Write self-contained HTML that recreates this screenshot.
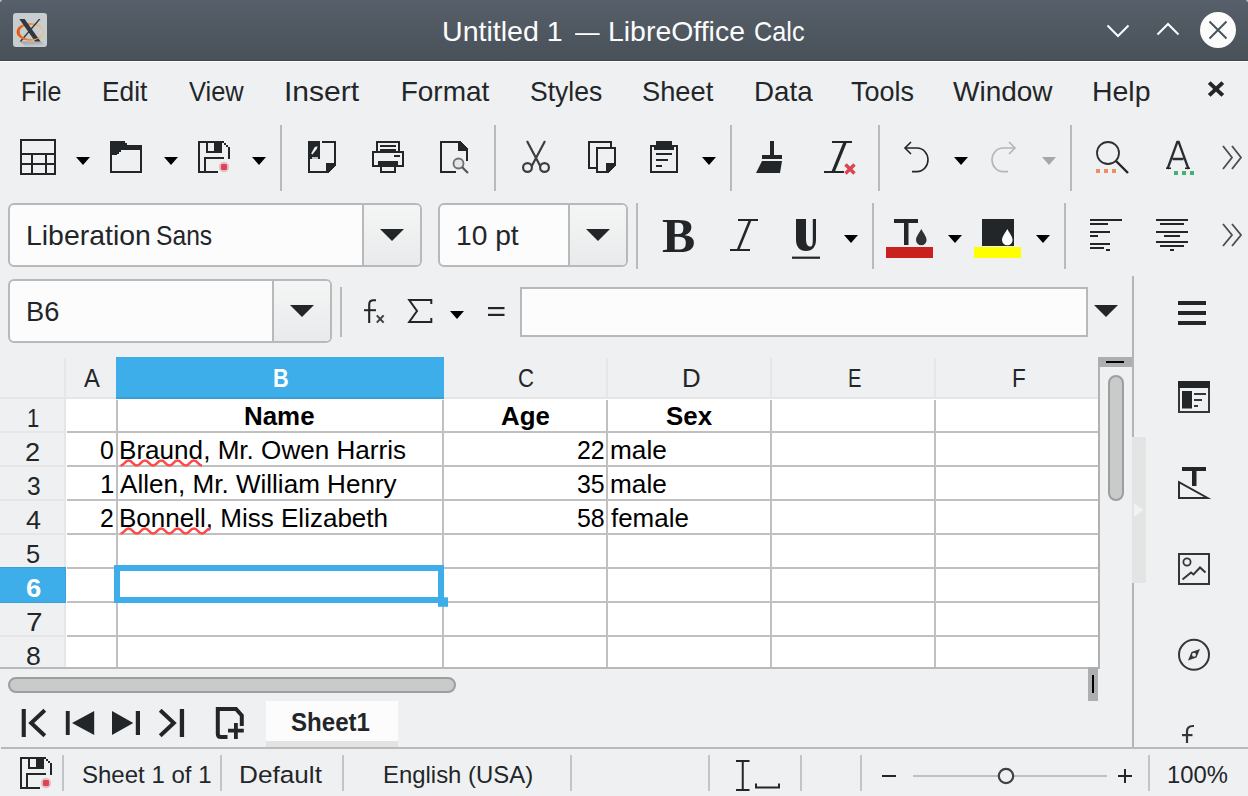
<!DOCTYPE html>
<html lang="en"><head><meta charset="utf-8"><title>Untitled 1 — LibreOffice Calc</title>
<style>
html,body{margin:0;padding:0}
body{width:1248px;height:796px;position:relative;overflow:hidden;background:#eff0f1;font-family:"Liberation Sans",sans-serif;color:#232629}
div,svg,span.t{position:absolute;box-sizing:border-box}
span.t{white-space:nowrap;transform-origin:0 50%}
svg{overflow:visible}
.sec{left:0;top:0;width:0;height:0}
</style></head><body>

<div class="sec" id="titlebar-menubar" role="banner"><div style="left:0px;top:0px;width:1248px;height:61px;background:linear-gradient(#57606a,#485058)"></div><div style="left:0px;top:60px;width:1248px;height:1px;background:#3f4850"></div><div style="left:0px;top:61px;width:1248px;height:1px;background:#fafbfb"></div><div style="left:0px;top:0px;width:2px;height:2px;background:#aeb3b7;border-radius:0 0 2px 0"></div><div style="left:1246px;top:0px;width:2px;height:2px;background:#aeb3b7;border-radius:0 0 0 2px"></div><div style="left:13px;top:13px;width:34px;height:34px;background:#c8cdd0;border-radius:3px;overflow:hidden"><svg style="left:0;top:0" width="34" height="34" viewBox="0 0 34 34"><defs><linearGradient id="og" x1="0" x2="1"><stop offset="0" stop-color="#e9520a"/><stop offset=".55" stop-color="#f2913a"/><stop offset="1" stop-color="#fbc055"/></linearGradient><linearGradient id="sh" x1="0" y1="0" x2="0.4" y2="1"><stop offset="0" stop-color="#000" stop-opacity=".22"/><stop offset="1" stop-color="#000" stop-opacity="0"/></linearGradient></defs><path d="M7 28.6H27.6L34 33V34H13Z" fill="url(#sh)"/><path fill-rule="evenodd" fill="url(#og)" d="M3.7 18.8A13.4 8.8 0 1 0 30.5 18.8A13.4 8.8 0 1 0 3.7 18.8ZM6.7 19A11.6 7.3 0 1 0 29.9 19A11.6 7.3 0 1 0 6.7 19Z"/><path d="M6.3 6H11.6L27.6 28.6H22.1Z" fill="#33383d"/><path d="M25.8 6H27.4L8.4 28.6H6.5Z" fill="#33383d"/><path fill="url(#og)" d="M3.7 18.8A13.4 8.8 0 0 0 30.5 18.8L29.9 19A11.6 7.3 0 0 1 6.7 19Z"/><path d="M26.6 6H27.3L19.5 15.3L18.6 15.5Z" fill="#33383d"/></svg></div><span class="t" style="left:442.00px;top:14.32px;font-size:28.5px;line-height:34px;color:#fcfcfc;transform:scaleX(1.0021);">Untitled 1</span><span class="t" style="left:574.60px;top:14.32px;font-size:28.5px;line-height:34px;color:#fcfcfc;transform:scaleX(0.8621);">—</span><span class="t" style="left:608.31px;top:14.32px;font-size:28.5px;line-height:34px;color:#fcfcfc;transform:scaleX(0.9974);">LibreOffice</span><span class="t" style="left:753.91px;top:14.32px;font-size:28.5px;line-height:34px;color:#fcfcfc;transform:scaleX(0.8859);">Calc</span><svg style="left:0px;top:0px;" width="1248" height="61" ><path d="M1107.5 25.5L1118 36L1128.5 25.5" fill="none" stroke="#fcfcfc" stroke-width="2"/><path d="M1157.5 34.5L1168 24L1178.5 34.5" fill="none" stroke="#fcfcfc" stroke-width="2"/><circle cx="1218" cy="30" r="18" fill="#fcfcfc"/><path d="M1209.5 21.5L1226.5 38.5M1226.5 21.5L1209.5 38.5" stroke="#4b545c" stroke-width="2"/></svg><span class="t" style="left:20.51px;top:74.80px;font-size:28px;line-height:34px;color:#232629;transform:scaleX(0.8932);">File</span><span class="t" style="left:101.92px;top:74.80px;font-size:28px;line-height:34px;color:#232629;transform:scaleX(0.9383);">Edit</span><span class="t" style="left:189.00px;top:74.80px;font-size:28px;line-height:34px;color:#232629;transform:scaleX(0.9087);">View</span><span class="t" style="left:284.15px;top:74.80px;font-size:28px;line-height:34px;color:#232629;transform:scaleX(1.0740);">Insert</span><span class="t" style="left:400.70px;top:74.80px;font-size:28px;line-height:34px;color:#232629;">Format</span><span class="t" style="left:529.55px;top:74.80px;font-size:28px;line-height:34px;color:#232629;transform:scaleX(0.9468);">Styles</span><span class="t" style="left:641.53px;top:74.80px;font-size:28px;line-height:34px;color:#232629;transform:scaleX(0.9739);">Sheet</span><span class="t" style="left:753.52px;top:74.80px;font-size:28px;line-height:34px;color:#232629;transform:scaleX(0.9901);">Data</span><span class="t" style="left:851.00px;top:74.80px;font-size:28px;line-height:34px;color:#232629;transform:scaleX(0.9633);">Tools</span><span class="t" style="left:953.00px;top:74.80px;font-size:28px;line-height:34px;color:#232629;">Window</span><span class="t" style="left:1092.07px;top:74.80px;font-size:28px;line-height:34px;color:#232629;transform:scaleX(1.0161);">Help</span><svg style="left:1207px;top:80px;" width="18" height="18" ><path d="M2.2 2.6L15.8 15.4M15.8 2.6L2.2 15.4" stroke="#232629" stroke-width="4"/></svg></div>
<div class="sec" id="standard-toolbar" role="toolbar"><svg style="left:20px;top:139px;" width="36" height="36" shape-rendering="crispEdges"><g fill="none" stroke="#232629" stroke-width="2"><rect x="1" y="1" width="34" height="34"/><path d="M1 14.5H35M1 24.5H35M11.5 14.5V35M25.5 14.5V35"/></g></svg><svg style="left:76px;top:157px;" width="14" height="8" ><path d="M0 0H14L7.0 8Z" fill="#000"/></svg><svg style="left:110px;top:141px;" width="32" height="32" viewBox="0 0 16 16" shape-rendering="crispEdges"><path d="M0 0H7.5V1H8.5V2H16V4.6H5.5V5.5H4.5V6.3H3.5V7H0Z" fill="#232629"/><rect x="0" y="0" width="1" height="16" fill="#232629"/><rect x="0" y="15" width="16" height="1" fill="#232629"/><rect x="15" y="2" width="1" height="14" fill="#232629"/></svg><svg style="left:164px;top:157px;" width="14" height="8" ><path d="M0 0H14L7.0 8Z" fill="#000"/></svg><svg style="left:198px;top:141px;" width="32" height="32" viewBox="0 0 16 16" shape-rendering="crispEdges"><rect x="0" y="0" width="1" height="16" fill="#232629"/><rect x="0" y="0" width="13" height="1" fill="#232629"/><rect x="0" y="15" width="10" height="1" fill="#232629"/><rect x="15" y="3" width="1" height="6" fill="#232629"/><rect x="13" y="1" width="1" height="1" fill="#232629"/><rect x="14" y="2" width="1" height="1" fill="#232629"/><rect x="4" y="0" width="1" height="6" fill="#232629"/><rect x="4" y="5" width="8" height="1" fill="#232629"/><rect x="8" y="0" width="4" height="6" fill="#232629"/><rect x="12" y="0" width="1" height="1" fill="#232629"/><rect x="3" y="8" width="10" height="1" fill="#232629"/><rect x="3" y="8" width="1" height="8" fill="#232629"/></svg><svg style="left:218px;top:161px;" width="12" height="12" ><circle cx="6" cy="6" r="5.2" fill="#da4453" opacity=".3"/><rect x="3" y="3" width="6" height="6" rx="1.2" fill="#da4453"/></svg><svg style="left:252px;top:157px;" width="14" height="8" ><path d="M0 0H14L7.0 8Z" fill="#000"/></svg><div style="left:280px;top:125px;width:2px;height:66px;background:#b9babb"></div><svg style="left:308px;top:141px;" width="28" height="32" viewBox="0 0 14 16" shape-rendering="crispEdges"><rect x="0" y="0" width="6" height="9" fill="#232629"/><rect x="7" y="0" width="7" height="1" fill="#232629"/><rect x="13" y="0" width="1" height="12" fill="#232629"/><rect x="0" y="9" width="1" height="7" fill="#232629"/><rect x="0" y="15" width="10" height="1" fill="#232629"/><path d="M9 11H14V12L10.5 16H9Z" fill="#232629"/><path d="M1.6 6.2L3.4 3L4.8 2.6L4.4 4L2.2 6.8Z" fill="#eff0f1" shape-rendering="auto"/><rect x="2" y="8" width="3" height="1" fill="#bfc0c1"/></svg><svg style="left:372px;top:141px;" width="32" height="32" viewBox="0 0 16 16" shape-rendering="crispEdges"><rect x="2" y="0" width="12" height="1" fill="#232629"/><rect x="2" y="0" width="1" height="6" fill="#232629"/><rect x="13" y="0" width="1" height="6" fill="#232629"/><rect x="4" y="2" width="8" height="1" fill="#232629"/><rect x="4" y="4" width="8" height="2" fill="#232629"/><rect x="0" y="5" width="16" height="1" fill="#232629"/><rect x="0" y="5" width="1" height="8" fill="#232629"/><rect x="15" y="5" width="1" height="8" fill="#232629"/><rect x="0" y="12" width="16" height="1" fill="#232629"/><rect x="11" y="7" width="3" height="1" fill="#232629"/><rect x="3" y="10" width="10" height="2" fill="#232629"/><rect x="4" y="12" width="1" height="4" fill="#232629"/><rect x="11" y="12" width="1" height="4" fill="#232629"/><rect x="4" y="15" width="8" height="1" fill="#232629"/></svg><svg style="left:440px;top:141px;" width="28" height="32" viewBox="0 0 14 16" shape-rendering="crispEdges"><rect x="0" y="0" width="1" height="16" fill="#232629"/><rect x="0" y="0" width="10" height="1" fill="#232629"/><rect x="0" y="15" width="8" height="1" fill="#232629"/><rect x="13" y="4" width="1" height="6" fill="#232629"/><path d="M9 0H10L14 4V5H9Z" fill="#232629"/></svg><svg style="left:440px;top:141px;" width="32" height="34" ><circle cx="18.5" cy="22.5" r="5" fill="#e4e5e6" stroke="#6d7072" stroke-width="1.8"/><path d="M22 26L28 32" stroke="#55585b" stroke-width="2.2"/></svg><div style="left:494px;top:125px;width:2px;height:66px;background:#b9babb"></div><svg style="left:522px;top:141px;" width="28" height="32" ><g fill="none" stroke="#3b3e41" stroke-width="2.2"><path d="M5 0L18.5 25.5M23 0L9.5 25.5"/><circle cx="5.5" cy="26.5" r="4.4"/><circle cx="22.5" cy="26.5" r="4.4"/></g></svg><svg style="left:588px;top:141px;" width="28" height="32" viewBox="0 0 14 16" shape-rendering="crispEdges"><rect x="0" y="0" width="12" height="1" fill="#232629"/><rect x="0" y="0" width="1" height="14" fill="#232629"/><rect x="0" y="13" width="4" height="1" fill="#232629"/><rect x="11" y="0" width="1" height="3" fill="#232629"/><rect x="4" y="3" width="10" height="1" fill="#232629"/><rect x="4" y="3" width="1" height="13" fill="#232629"/><rect x="13" y="3" width="1" height="8" fill="#232629"/><rect x="4" y="15" width="6" height="1" fill="#232629"/><path d="M9 11H14V12L10.5 16H9Z" fill="#232629"/></svg><svg style="left:650px;top:141px;" width="28" height="32" viewBox="0 0 14 16" shape-rendering="crispEdges"><rect x="3" y="0" width="8" height="2" fill="#232629"/><rect x="2" y="2" width="10" height="2.7" fill="#232629"/><rect x="0" y="2" width="1" height="14" fill="#232629"/><rect x="13" y="2" width="1" height="14" fill="#232629"/><rect x="0" y="2" width="14" height="1" fill="#232629"/><rect x="0" y="15" width="14" height="1" fill="#232629"/><rect x="3" y="6" width="8" height="1" fill="#232629"/><rect x="3" y="9" width="6" height="1" fill="#232629"/><rect x="3" y="12" width="3" height="1" fill="#232629"/></svg><svg style="left:702px;top:157px;" width="14" height="8" ><path d="M0 0H14L7.0 8Z" fill="#000"/></svg><div style="left:730px;top:125px;width:2px;height:66px;background:#b9babb"></div><svg style="left:756px;top:141px;" width="28" height="32" ><path d="M14 0H18V14H26V18H6V14H14Z" fill="#232629"/><path d="M6 20H26L24 32H0Z" fill="#232629"/></svg><svg style="left:824px;top:141px;" width="34" height="36" ><path d="M8 0H28V2H8ZM0 30H20V32H0Z" fill="#232629"/><path d="M19.3 1.5H22.8L11 30.5H7.5Z" fill="#232629"/><path d="M21.5 23.5L30.5 32.5M30.5 23.5L21.5 32.5" stroke="#da4453" stroke-width="3.4"/></svg><div style="left:878px;top:125px;width:2px;height:66px;background:#b9babb"></div><svg style="left:904px;top:141px;" width="24" height="32" ><g fill="none" stroke="#232629" stroke-width="1.6"><path d="M7 1L1 7L7 13"/><path d="M1 7H13A11 11.8 0 0 1 13 30.6H8"/></g></svg><svg style="left:954px;top:157px;" width="14" height="8" ><path d="M0 0H14L7.0 8Z" fill="#000"/></svg><svg style="left:992px;top:141px;" width="24" height="32" ><g fill="none" stroke="#b3b5b6" stroke-width="1.6" transform="translate(24 0) scale(-1 1)"><path d="M7 1L1 7L7 13"/><path d="M1 7H13A11 11.8 0 0 1 13 30.6H8"/></g></svg><svg style="left:1042px;top:157px;" width="14" height="8" ><path d="M0 0H14L7.0 8Z" fill="#a6a7a8"/></svg><div style="left:1070px;top:125px;width:2px;height:66px;background:#b9babb"></div><svg style="left:1096px;top:141px;" width="34" height="34" ><circle cx="12" cy="12" r="11" fill="none" stroke="#2d3033" stroke-width="1.8"/><path d="M20 20L32 32" stroke="#232629" stroke-width="2.4"/><rect x="0" y="28" width="4" height="4" fill="#f08b63"/><rect x="8" y="28" width="4" height="4" fill="#f08b63"/><rect x="16" y="28" width="4" height="4" fill="#f08b63"/></svg><svg style="left:1166px;top:141px;" width="30" height="36" ><path d="M1.5 28L11.3 1H12.7L22.5 28M6.6 18H17.4" fill="none" stroke="#2b2e31" stroke-width="2.3"/><path d="M0 26.5H5V28H0ZM19 26.5H24V28H19Z" fill="#232629"/><rect x="8" y="30" width="4" height="4" fill="#3fb371"/><rect x="16" y="30" width="4" height="4" fill="#3fb371"/><rect x="24" y="30" width="4" height="4" fill="#3fb371"/></svg><svg style="left:1222px;top:145px;" width="22" height="26" ><path d="M1 1L10 12.5L1 24M10 1L19 12.5L10 24" fill="none" stroke="#4a4d50" stroke-width="1.8"/></svg></div>
<div class="sec" id="formatting-toolbar" role="toolbar"><div style="left:8px;top:203px;width:414px;height:64px;background:#fcfcfc;border:2px solid #b8b9ba;border-radius:6px;overflow:hidden"><div style="left:352px;top:0;width:60px;height:60px;border-left:2px solid #b8b9ba;background:linear-gradient(#f4f5f5,#e9eaeb)"></div></div><span class="t" style="left:25.77px;top:219.30px;font-size:28px;line-height:34px;color:#232629;transform:scaleX(1.0150);">Liberation</span><span class="t" style="left:156.32px;top:219.30px;font-size:28px;line-height:34px;color:#232629;transform:scaleX(0.8800);">Sans</span><svg style="left:380px;top:229px;" width="24" height="12" ><path d="M0 0H24L12 12Z" fill="#232629"/></svg><div style="left:438px;top:203px;width:190px;height:64px;background:#fcfcfc;border:2px solid #b8b9ba;border-radius:6px;overflow:hidden"><div style="left:128px;top:0;width:60px;height:60px;border-left:2px solid #b8b9ba;background:linear-gradient(#f4f5f5,#e9eaeb)"></div></div><span class="t" style="left:455.79px;top:219.30px;font-size:28px;line-height:34px;color:#232629;transform:scaleX(1.0067);">10 pt</span><svg style="left:586px;top:229px;" width="24" height="12" ><path d="M0 0H24L12 12Z" fill="#232629"/></svg><div style="left:636px;top:203px;width:2px;height:66px;background:#b9babb"></div><span class="t" style="left:661.80px;top:206.67px;font-size:48px;line-height:58px;color:#232629;font-weight:700;font-family:'Liberation Serif',serif;transform:scaleX(1.0387);">B</span><svg style="left:730px;top:219px;" width="28" height="32" ><path d="M8 0H28V2H8ZM0 30H20V32H0Z" fill="#232629"/><path d="M18.6 1.5H21.4L9.6 30.5H6.8Z" fill="#232629"/></svg><svg style="left:792px;top:219px;" width="28" height="40" ><path d="M4 0H14V20C14 25 15.5 27.5 18.5 27.5C20.5 27.5 20.8 25 20.8 20V0H24V21C24 27.5 20.5 32 14 32C7.5 32 4 27.5 4 21Z" fill="#232629"/><rect x="0" y="37.6" width="28" height="2.2" fill="#232629"/></svg><svg style="left:844px;top:235px;" width="14" height="8" ><path d="M0 0H14L7.0 8Z" fill="#000"/></svg><div style="left:872px;top:203px;width:2px;height:66px;background:#b9babb"></div><svg style="left:886px;top:219px;" width="48" height="40" ><path d="M8 0H32V4H22.5V26H18V4H8Z" fill="#232629"/><path d="M35.3 10C37 13.5 40.6 17.5 40.6 21A5.3 5.3 0 0 1 30 21C30 17.5 33.6 13.5 35.3 10Z" fill="#2f3235"/><rect x="0" y="28" width="47" height="11" fill="#c9211e"/></svg><svg style="left:948px;top:235px;" width="14" height="8" ><path d="M0 0H14L7.0 8Z" fill="#000"/></svg><svg style="left:974px;top:219px;" width="48" height="40" ><rect x="8" y="0" width="32" height="27" fill="#232629"/><path d="M33.3 10C35 13.5 38.6 17.5 38.6 21A5.3 5.3 0 0 1 28 21C28 17.5 31.6 13.5 33.3 10Z" fill="#fcfcfc"/><rect x="0" y="28" width="47" height="11" fill="#ffff00"/></svg><svg style="left:1036px;top:235px;" width="14" height="8" ><path d="M0 0H14L7.0 8Z" fill="#000"/></svg><div style="left:1064px;top:203px;width:2px;height:66px;background:#b9babb"></div><svg style="left:1090px;top:219px;" width="32" height="32" shape-rendering="crispEdges"><rect x="0" y="0" width="32" height="2" fill="#232629"/><rect x="0" y="4" width="18" height="2" fill="#232629"/><rect x="0" y="12" width="20" height="2" fill="#232629"/><rect x="0" y="16" width="8" height="2" fill="#232629"/><rect x="0" y="24" width="20" height="2" fill="#232629"/><rect x="0" y="28" width="14" height="2" fill="#232629"/><rect x="16" y="30" width="4" height="2" fill="#232629"/></svg><svg style="left:1156px;top:219px;" width="32" height="32" shape-rendering="crispEdges"><rect x="0" y="0" width="32" height="2" fill="#232629"/><rect x="4" y="4" width="24" height="2" fill="#232629"/><rect x="0" y="12" width="32" height="2" fill="#232629"/><rect x="8" y="16" width="16" height="2" fill="#232629"/><rect x="0" y="22" width="32" height="2" fill="#232629"/><rect x="4" y="26" width="24" height="2" fill="#232629"/><rect x="14" y="30" width="4" height="2" fill="#232629"/></svg><svg style="left:1222px;top:223px;" width="22" height="26" ><path d="M1 1L10 12L1 23M10 1L19 12L10 23" fill="none" stroke="#4a4d50" stroke-width="1.8"/></svg></div>
<div class="sec" id="formula-bar" role="toolbar"><div style="left:8px;top:279px;width:324px;height:64px;background:#fcfcfc;border:2px solid #b8b9ba;border-radius:6px;overflow:hidden"><div style="left:262px;top:0;width:60px;height:60px;border-left:2px solid #b8b9ba;background:linear-gradient(#f4f5f5,#e9eaeb)"></div></div><span class="t" style="left:25.86px;top:294.70px;font-size:28px;line-height:34px;color:#232629;transform:scaleX(0.9724);">B6</span><svg style="left:290px;top:305px;" width="24" height="12" ><path d="M0 0H24L12 12Z" fill="#232629"/></svg><div style="left:340px;top:287px;width:2px;height:50px;background:#b9babb"></div><svg style="left:364px;top:299px;" width="22" height="25" ><path d="M12 1.2H9.5C6.5 1.2 5.2 2.5 5.2 5.5V24" fill="none" stroke="#232629" stroke-width="2.1"/><rect x="0" y="10.2" width="12" height="2" fill="#232629"/><path d="M12.8 16.4L19.6 23.6M19.6 16.4L12.8 23.6" stroke="#3a3d40" stroke-width="2"/></svg><svg style="left:407px;top:299px;" width="26" height="25" ><path d="M24.3 5V1H2.2L10 12L2.2 23H24.3V19" fill="none" stroke="#232629" stroke-width="2"/></svg><svg style="left:450px;top:311px;" width="14" height="8" ><path d="M0 0H14L7.0 8Z" fill="#000"/></svg><svg style="left:488px;top:307px;" width="17" height="10" ><rect x="0" y="0" width="16.5" height="2.2" fill="#232629"/><rect x="0" y="6.8" width="16.5" height="2.2" fill="#232629"/></svg><div style="left:520px;top:287px;width:568px;height:50px;background:#fcfcfc;border:2px solid #b8b9ba"></div><svg style="left:1094px;top:305px;" width="24" height="12" ><path d="M0 0H24L12 12Z" fill="#232629"/></svg></div>
<div class="sec" id="spreadsheet-grid" role="grid"><div style="left:66px;top:399px;width:1032px;height:268px;background:#fff"></div><div style="left:0px;top:397px;width:1098px;height:2px;background:#e5e6e7"></div><div style="left:64px;top:358px;width:2px;height:41px;background:#e5e6e7"></div><div style="left:116px;top:358px;width:2px;height:41px;background:#e5e6e7"></div><div style="left:442px;top:358px;width:2px;height:41px;background:#e5e6e7"></div><div style="left:606px;top:358px;width:2px;height:41px;background:#e5e6e7"></div><div style="left:770px;top:358px;width:2px;height:41px;background:#e5e6e7"></div><div style="left:934px;top:358px;width:2px;height:41px;background:#e5e6e7"></div><div style="left:0px;top:431px;width:66px;height:2px;background:#e5e6e7"></div><div style="left:0px;top:465px;width:66px;height:2px;background:#e5e6e7"></div><div style="left:0px;top:499px;width:66px;height:2px;background:#e5e6e7"></div><div style="left:0px;top:533px;width:66px;height:2px;background:#e5e6e7"></div><div style="left:0px;top:567px;width:66px;height:2px;background:#e5e6e7"></div><div style="left:0px;top:601px;width:66px;height:2px;background:#e5e6e7"></div><div style="left:0px;top:635px;width:66px;height:2px;background:#e5e6e7"></div><div style="left:64px;top:399px;width:2px;height:268px;background:#e5e6e7"></div><div style="left:116px;top:400px;width:2px;height:267px;background:#c0c0c0"></div><div style="left:442px;top:400px;width:2px;height:267px;background:#c0c0c0"></div><div style="left:606px;top:400px;width:2px;height:267px;background:#c0c0c0"></div><div style="left:770px;top:400px;width:2px;height:267px;background:#c0c0c0"></div><div style="left:934px;top:400px;width:2px;height:267px;background:#c0c0c0"></div><div style="left:67px;top:431px;width:1031px;height:2px;background:#c0c0c0"></div><div style="left:67px;top:465px;width:1031px;height:2px;background:#c0c0c0"></div><div style="left:67px;top:499px;width:1031px;height:2px;background:#c0c0c0"></div><div style="left:67px;top:533px;width:1031px;height:2px;background:#c0c0c0"></div><div style="left:67px;top:567px;width:1031px;height:2px;background:#c0c0c0"></div><div style="left:67px;top:601px;width:1031px;height:2px;background:#c0c0c0"></div><div style="left:67px;top:635px;width:1031px;height:2px;background:#c0c0c0"></div><div style="left:116px;top:357px;width:328px;height:42px;background:#3daee9;border-bottom:2px solid #3a9fd6"></div><div style="left:0px;top:567px;width:66px;height:36px;background:#3daee9;border:1px solid #3a9fd6;border-left:0"></div><span class="t" style="left:84.00px;top:361.99px;font-size:26px;line-height:32px;color:#232629;transform:scaleX(0.9111);">A</span><span class="t" style="left:518.15px;top:361.99px;font-size:26px;line-height:32px;color:#232629;transform:scaleX(0.8529);">C</span><span class="t" style="left:681.81px;top:361.99px;font-size:26px;line-height:32px;color:#232629;transform:scaleX(0.9938);">D</span><span class="t" style="left:848.15px;top:361.99px;font-size:26px;line-height:32px;color:#232629;transform:scaleX(0.7733);">E</span><span class="t" style="left:1011.76px;top:361.99px;font-size:26px;line-height:32px;color:#232629;transform:scaleX(0.8692);">F</span><span class="t" style="left:273.16px;top:361.99px;font-size:26px;line-height:32px;color:#fff;font-weight:700;transform:scaleX(0.8353);">B</span><span class="t" style="left:26.75px;top:401.99px;font-size:26px;line-height:32px;color:#232629;transform:scaleX(0.8462);">1</span><span class="t" style="left:25.35px;top:435.99px;font-size:26px;line-height:32px;color:#232629;transform:scaleX(1.0462);">2</span><span class="t" style="left:26.80px;top:469.99px;font-size:26px;line-height:32px;color:#232629;transform:scaleX(0.9429);">3</span><span class="t" style="left:26.00px;top:503.99px;font-size:26px;line-height:32px;color:#232629;transform:scaleX(1.0357);">4</span><span class="t" style="left:26.32px;top:537.99px;font-size:26px;line-height:32px;color:#232629;transform:scaleX(0.9769);">5</span><span class="t" style="left:25.85px;top:605.99px;font-size:26px;line-height:32px;color:#232629;transform:scaleX(1.1462);">7</span><span class="t" style="left:26.28px;top:639.99px;font-size:26px;line-height:32px;color:#232629;transform:scaleX(1.0231);">8</span><span class="t" style="left:26.00px;top:571.99px;font-size:26px;line-height:32px;color:#fff;font-weight:700;transform:scaleX(1.0571);">6</span><span class="t" style="left:244.03px;top:399.76px;font-size:26.67px;line-height:32px;color:#000;font-weight:700;transform:scaleX(0.9721);">Name</span><span class="t" style="left:501.00px;top:399.76px;font-size:26.67px;line-height:32px;color:#000;font-weight:700;transform:scaleX(0.9691);">Age</span><span class="t" style="left:666.40px;top:399.76px;font-size:26.67px;line-height:32px;color:#000;font-weight:700;transform:scaleX(0.9705);">Sex</span><span class="t" style="left:99.87px;top:433.76px;font-size:26.67px;line-height:32px;color:#000;transform:scaleX(0.9308);">0</span><span class="t" style="left:119.24px;top:433.76px;font-size:26.67px;line-height:32px;color:#000;transform:scaleX(0.9788);">Braund, Mr. Owen Harris</span><span class="t" style="left:576.57px;top:433.76px;font-size:26.67px;line-height:32px;color:#000;transform:scaleX(0.9344);">22</span><span class="t" style="left:610.02px;top:433.76px;font-size:26.67px;line-height:32px;color:#000;transform:scaleX(0.9830);">male</span><span class="t" style="left:99.67px;top:467.76px;font-size:26.67px;line-height:32px;color:#000;transform:scaleX(0.9667);">1</span><span class="t" style="left:120.20px;top:467.76px;font-size:26.67px;line-height:32px;color:#000;transform:scaleX(0.9779);">Allen, Mr. William Henry</span><span class="t" style="left:576.57px;top:467.76px;font-size:26.67px;line-height:32px;color:#000;transform:scaleX(0.9344);">35</span><span class="t" style="left:610.02px;top:467.76px;font-size:26.67px;line-height:32px;color:#000;transform:scaleX(0.9830);">male</span><span class="t" style="left:99.87px;top:501.76px;font-size:26.67px;line-height:32px;color:#000;transform:scaleX(0.9308);">2</span><span class="t" style="left:119.25px;top:501.76px;font-size:26.67px;line-height:32px;color:#000;transform:scaleX(0.9763);">Bonnell, Miss Elizabeth</span><span class="t" style="left:576.57px;top:501.76px;font-size:26.67px;line-height:32px;color:#000;transform:scaleX(0.9344);">58</span><span class="t" style="left:611.00px;top:501.76px;font-size:26.67px;line-height:32px;color:#000;transform:scaleX(0.9724);">female</span><svg style="left:0px;top:0px;" width="1248" height="796" ><path d="M120.5 465.5C124.58 465.5 124.58 460.5 128.65 460.5C132.72 460.5 132.72 465.5 136.80 465.5C140.88 465.5 140.88 460.5 144.95 460.5C149.03 460.5 149.03 465.5 153.10 465.5C157.18 465.5 157.18 460.5 161.25 460.5C165.33 460.5 165.33 465.5 169.40 465.5C173.48 465.5 173.48 460.5 177.55 460.5C181.63 460.5 181.63 465.5 185.70 465.5C189.78 465.5 189.78 460.5 193.85 460.5C197.93 460.5 197.93 465.5 202.00 465.5" fill="none" stroke="#ff4a4a" stroke-width="2.7"/></svg><svg style="left:0px;top:0px;" width="1248" height="796" ><path d="M120.5 533.5C124.58 533.5 124.58 528.5 128.65 528.5C132.72 528.5 132.72 533.5 136.80 533.5C140.88 533.5 140.88 528.5 144.95 528.5C149.03 528.5 149.03 533.5 153.10 533.5C157.18 533.5 157.18 528.5 161.25 528.5C165.33 528.5 165.33 533.5 169.40 533.5C173.48 533.5 173.48 528.5 177.55 528.5C181.63 528.5 181.63 533.5 185.70 533.5C189.78 533.5 189.78 528.5 193.85 528.5C197.93 528.5 197.93 533.5 202.00 533.5C206.08 533.5 206.08 528.5 210.15 528.5" fill="none" stroke="#ff4a4a" stroke-width="2.7"/></svg><svg style="left:0px;top:0px;" width="1248" height="796" ><rect x="117" y="568" width="324" height="32" fill="none" stroke="#3daee9" stroke-width="6"/><rect x="438" y="597.3" width="10" height="9.5" fill="#3daee9"/></svg><div style="left:0px;top:667px;width:1100px;height:2px;background:#b8b9ba"></div><div style="left:1098px;top:357px;width:2px;height:312px;background:#b0b1b2"></div><div style="left:1098px;top:357px;width:35px;height:10px;background:#adaeaf"></div><div style="left:1106px;top:361px;width:18px;height:2px;background:#000"></div><div style="left:1108px;top:375px;width:16px;height:126px;background:#c9cbcb;border:2px solid #9c9e9f;border-radius:8px"></div><div style="left:1088px;top:667px;width:10px;height:34px;background:#adaeaf"></div><div style="left:1092px;top:675px;width:2px;height:18px;background:#000"></div><div style="left:8px;top:677px;width:448px;height:16px;background:#c9cbcb;border:2px solid #9c9e9f;border-radius:8px"></div></div>
<div class="sec" id="sidebar-deck" role="complementary"><div style="left:1132px;top:276px;width:2px;height:161px;background:#b4b5b6"></div><div style="left:1132px;top:583px;width:2px;height:165px;background:#b4b5b6"></div><div style="left:1132px;top:437px;width:14px;height:146px;background:#e3e4e4"></div><svg style="left:1134px;top:503px;" width="10" height="14" ><path d="M0 0L9.5 7L0 14Z" fill="#f1f2f2"/></svg><div style="left:1178px;top:301px;width:28px;height:4px;background:#232629"></div><div style="left:1178px;top:311px;width:28px;height:4px;background:#232629"></div><div style="left:1178px;top:321px;width:28px;height:4px;background:#232629"></div><svg style="left:1178px;top:381px;" width="32" height="32" ><rect x="1" y="1" width="30" height="30" fill="none" stroke="#35383b" stroke-width="2"/><rect x="0" y="0" width="32" height="7" fill="#232629"/><rect x="4" y="10" width="10" height="17.5" fill="#232629"/><rect x="16" y="12" width="12" height="2" fill="#35383b"/><rect x="16" y="18" width="8" height="2" fill="#35383b"/><rect x="16" y="24" width="4" height="2" fill="#35383b"/></svg><svg style="left:1178px;top:467px;" width="32" height="33" ><rect x="4" y="0" width="24" height="4" fill="#232629"/><rect x="14" y="0" width="4.5" height="19" fill="#232629"/><path d="M1 15.2V31H29.5Z" fill="none" stroke="#2c2f32" stroke-width="2"/></svg><svg style="left:1178px;top:553px;" width="32" height="32" ><rect x="1" y="1" width="30" height="30" fill="none" stroke="#34373a" stroke-width="2"/><circle cx="9" cy="9" r="3.6" fill="none" stroke="#34373a" stroke-width="1.8"/><path d="M4.5 26.5L13 19.5L15.5 21.5L22 14.5L27.5 19.5" fill="none" stroke="#34373a" stroke-width="2"/></svg><svg style="left:1178px;top:639px;" width="32" height="32" ><circle cx="16" cy="15.8" r="15" fill="none" stroke="#34373a" stroke-width="2"/><path d="M10 21.5L13.5 13L22 10L18.5 18.5Z" fill="#34373a"/><circle cx="16" cy="15.8" r="2" fill="#e6e7e8"/></svg><svg style="left:1182px;top:724px;overflow:hidden" width="14" height="19" ><path d="M12 2H10.8C7.2 2 5 4 5 7.6V23" fill="none" stroke="#34373a" stroke-width="2.2"/><rect x="0" y="10" width="10.5" height="2.2" fill="#34373a"/></svg></div>
<div class="sec" id="sheet-tabs-statusbar" role="contentinfo"><svg style="left:0px;top:700px;" width="260" height="46" ><rect x="21.7" y="9" width="4.1" height="28" fill="#232629"/><path d="M44.8 710.3L31.2 723L44.8 735.7" transform="translate(0 -700)" fill="none" stroke="#232629" stroke-width="4"/><rect x="65.8" y="11" width="3.9" height="24" fill="#232629"/><path d="M72 23L94.2 11V35Z" fill="#232629"/><path d="M112 11V35L133.3 23Z" fill="#232629"/><rect x="135.8" y="11" width="4.2" height="24" fill="#232629"/><path d="M160.2 10.3L173.8 23L160.2 35.7" fill="none" stroke="#232629" stroke-width="4"/><rect x="179.8" y="9" width="4.3" height="28" fill="#232629"/><path d="M227.5 37H221Q217.8 37 217.8 33.8V9H236L241.8 15.5V26" fill="none" stroke="#232629" stroke-width="4"/><path d="M228 30.6H243.8M235.9 23V39" stroke="#232629" stroke-width="3.8"/></svg><div style="left:266px;top:701px;width:132px;height:46px;background:#fcfcfc;border-bottom:6px solid #e3e3e3"></div><span class="t" style="left:290.60px;top:707.34px;font-size:25px;line-height:30px;color:#232629;font-weight:700;transform:scaleX(0.9625);">Sheet1</span><div style="left:1px;top:747px;width:1247px;height:2px;background:#b9babb"></div><svg style="left:20px;top:757px;" width="32" height="32" viewBox="0 0 16 16" shape-rendering="crispEdges"><rect x="0" y="0" width="1" height="16" fill="#232629"/><rect x="0" y="0" width="13" height="1" fill="#232629"/><rect x="0" y="15" width="10" height="1" fill="#232629"/><rect x="15" y="3" width="1" height="6" fill="#232629"/><rect x="13" y="1" width="1" height="1" fill="#232629"/><rect x="14" y="2" width="1" height="1" fill="#232629"/><rect x="4" y="0" width="1" height="6" fill="#232629"/><rect x="4" y="5" width="8" height="1" fill="#232629"/><rect x="8" y="0" width="4" height="6" fill="#232629"/><rect x="12" y="0" width="1" height="1" fill="#232629"/><rect x="3" y="8" width="10" height="1" fill="#232629"/><rect x="3" y="8" width="1" height="8" fill="#232629"/></svg><svg style="left:40px;top:777px;" width="12" height="12" ><circle cx="6" cy="6" r="5.2" fill="#da4453" opacity=".3"/><rect x="3" y="3" width="6" height="6" rx="1.2" fill="#da4453"/></svg><div style="left:62px;top:755px;width:2px;height:36px;background:#c3c4c5"></div><div style="left:220px;top:755px;width:2px;height:36px;background:#c3c4c5"></div><div style="left:342px;top:755px;width:2px;height:36px;background:#c3c4c5"></div><div style="left:570px;top:755px;width:2px;height:36px;background:#c3c4c5"></div><div style="left:708px;top:755px;width:2px;height:36px;background:#c3c4c5"></div><div style="left:800px;top:755px;width:2px;height:36px;background:#c3c4c5"></div><div style="left:860px;top:755px;width:2px;height:36px;background:#c3c4c5"></div><div style="left:1148px;top:755px;width:2px;height:36px;background:#c3c4c5"></div><span class="t" style="left:81.52px;top:760.01px;font-size:24.5px;line-height:30px;color:#232629;transform:scaleX(0.9800);">Sheet 1 of 1</span><span class="t" style="left:239.46px;top:760.01px;font-size:24.5px;line-height:30px;color:#232629;transform:scaleX(1.0683);">Default</span><span class="t" style="left:383.25px;top:760.01px;font-size:24.5px;line-height:30px;color:#232629;transform:scaleX(0.9755);">English (USA)</span><span class="t" style="left:1166.63px;top:760.01px;font-size:24.5px;line-height:30px;color:#232629;transform:scaleX(0.9708);">100%</span><svg style="left:736px;top:760px;" width="46" height="32" ><path d="M0 1H13.5M0 30H13.5M6.75 1V30" fill="none" stroke="#232629" stroke-width="2"/><path d="M20 23.5V27.5H43V23.5" fill="none" stroke="#232629" stroke-width="2"/></svg><div style="left:882px;top:775px;width:14px;height:2px;background:#232629"></div><div style="left:913px;top:775px;width:194px;height:2px;background:#bfc0c1"></div><svg style="left:996px;top:766px;" width="20" height="20" ><circle cx="10" cy="10" r="7.2" fill="#eff0f1" stroke="#3f4245" stroke-width="2.2"/></svg><div style="left:1118px;top:775px;width:14px;height:2px;background:#232629"></div><div style="left:1124px;top:769px;width:2px;height:14px;background:#232629"></div></div>
</body></html>
